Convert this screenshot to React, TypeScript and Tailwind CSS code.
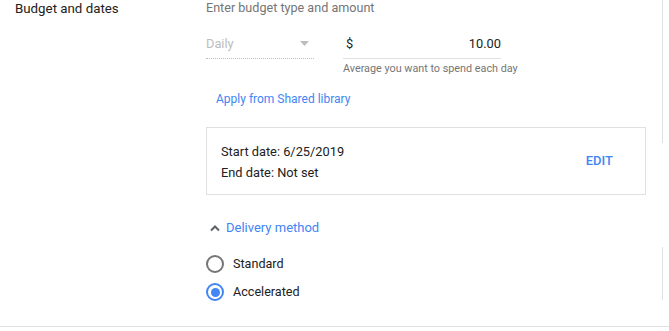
import React from 'react'

const RadioRow = ({ label, checked }: { label: string; checked: boolean }) => {
  return (
    <div className="flex items-center h-[28px]">
      <div
        className={`w-[18px] h-[18px] rounded-full border-2 flex items-center justify-center ${
          checked ? 'border-[#4285f4]' : 'border-[#757575]'
        }`}
      >
        {checked && <div className="w-[9px] h-[9px] rounded-full bg-[#4285f4]" />}
      </div>
      <span className="ml-[9px] text-[12.6px] leading-[16px] text-[#212121]">{label}</span>
    </div>
  )
}

const App: React.FC = (): JSX.Element => {
  return (
    <div className="w-[669px] h-[331px] bg-white overflow-hidden font-['Roboto','Liberation_Sans',sans-serif]">
      <div className="flex h-[327px] border-b border-[#e0e0e0]">
        <div className="w-[662px] flex">
          {/* label column */}
          <div className="w-[206px] pl-[15px]">
            <div className="text-[13.3px] leading-[18px] text-[#212121]">Budget and dates</div>
          </div>

          {/* form column */}
          <div className="w-[440px] flex flex-col">
            <div className="text-[12.6px] leading-[16px] text-[#757575]">Enter budget type and amount</div>

            <div className="flex items-start mt-[18px]">
              <div className="w-[108px] flex items-center justify-between pb-[4px] border-b border-dotted border-[#bdbdbd]">
                <span className="text-[12.8px] leading-[20px] text-[#bdbdbd]">Daily</span>
                <svg width="9" height="5" viewBox="0 0 9 5" className="mr-[5px] mb-[2px]">
                  <path d="M0 0 L9 0 L4.5 5 Z" fill="#bdbdbd" />
                </svg>
              </div>

              <div className="ml-[29px] flex flex-col">
                <div className="w-[158px] flex justify-between pl-[3px] pb-[4px] border-b border-[#e0e0e0]">
                  <span className="text-[12.8px] leading-[20px] text-[#212121]">$</span>
                  <span className="text-[12.8px] leading-[20px] text-[#212121]">10.00</span>
                </div>
                <div className="mt-[3px] text-[10.8px] leading-[13px] text-[#757575] whitespace-nowrap">
                  Average you want to spend each day
                </div>
              </div>
            </div>

            <div className="mt-[16px] ml-[10px] text-[12px] leading-[16px] text-[#4285f4]">Apply from Shared library</div>

            <div className="mt-[20px] h-[68px] border border-[#e0e0e0] flex items-center justify-between pl-[14px] pr-[32px]">
              <div className="flex flex-col gap-[5px] text-[12.8px] leading-[16px] text-[#212121] mt-[3px]">
                <span>Start date: 6/25/2019</span>
                <span>End date: Not set</span>
              </div>
              <span className="text-[13px] leading-[16px] font-medium text-[#4285f4]">EDIT</span>
            </div>

            <div className="mt-[25px] flex items-center">
              <svg width="10" height="7" viewBox="0 0 10 7" className="ml-[4px]">
                <path d="M1 5.5 L5 1.5 L9 5.5" stroke="#5f6368" strokeWidth="2" fill="none" />
              </svg>
              <span className="ml-[6px] text-[13px] leading-[16px] text-[#4285f4]">Delivery method</span>
            </div>

            <div className="mt-[14px] flex flex-col">
              <RadioRow label="Standard" checked={false} />
              <RadioRow label="Accelerated" checked={true} />
            </div>
          </div>
        </div>

        {/* right edge divider */}
        <div className="w-px flex flex-col">
          <div className="h-[143px] bg-[#e0e0e0]" />
          <div className="h-[104px]" />
          <div className="h-[53px] bg-[#e0e0e0]" />
        </div>
      </div>
    </div>
  )
}

export default App
